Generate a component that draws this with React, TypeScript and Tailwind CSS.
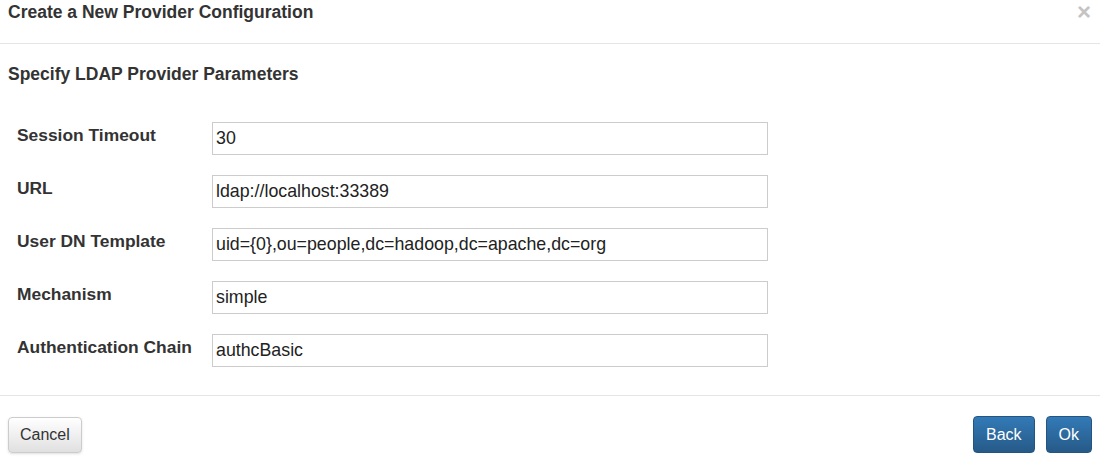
import React from 'react';

const fields = [
  { label: 'Session Timeout', value: '30' },
  { label: 'URL', value: 'ldap://localhost:33389' },
  { label: 'User DN Template', value: 'uid={0},ou=people,dc=hadoop,dc=apache,dc=org' },
  { label: 'Mechanism', value: 'simple' },
  { label: 'Authentication Chain', value: 'authcBasic' },
];

const App = () => {
  return (
    <div
      className="w-[1100px] h-[464px] bg-white text-[#333]"
      style={{ fontFamily: '"Liberation Sans", Arial, sans-serif' }}
    >
      <div className="flex items-start justify-between h-[44px] px-[8px] pt-[1px] border-b border-[#e5e5e5]">
        <h4 className="text-[17.5px] font-bold leading-[22px]">Create a New Provider Configuration</h4>
        <button className="mr-[1px] mt-[1px] text-[24px] font-bold leading-[20px] text-[#c4c4c4]">×</button>
      </div>

      <div className="h-[352px] border-b border-[#e5e5e5]">
        <h5 className="px-[8px] pt-[19px] text-[17.5px] font-bold leading-[22px]">Specify LDAP Provider Parameters</h5>
        <div className="flex flex-col gap-[20px] pl-[17px] pt-[37px]">
          {fields.map(({ label, value }) => (
            <div className="flex items-start" key={label}>
              <label className="w-[195px] pt-[2px] text-[17.4px] font-bold leading-[22px]">{label}</label>
              <input
                readOnly
                value={value}
                className="w-[556px] h-[33px] border border-[#ccc] px-[3px] text-[17.8px] text-[#222] outline-none"
              />
            </div>
          ))}
        </div>
      </div>

      <div className="flex items-center justify-between px-[8px] pt-[20px]">
        <button className="h-[36px] px-[11px] rounded-[4px] border border-[#ccc] bg-gradient-to-b from-white to-[#e0e0e0] text-[16px] text-[#333] shadow-sm">
          Cancel
        </button>
        <div className="flex gap-[11px]">
          <button className="h-[37px] px-[12px] rounded-[4px] border border-[#245580] bg-gradient-to-b from-[#337ab7] to-[#265a88] text-[16px] text-white">
            Back
          </button>
          <button className="h-[37px] px-[12px] rounded-[4px] border border-[#245580] bg-gradient-to-b from-[#337ab7] to-[#265a88] text-[16px] text-white">
            Ok
          </button>
        </div>
      </div>
    </div>
  );
};

export default App;
